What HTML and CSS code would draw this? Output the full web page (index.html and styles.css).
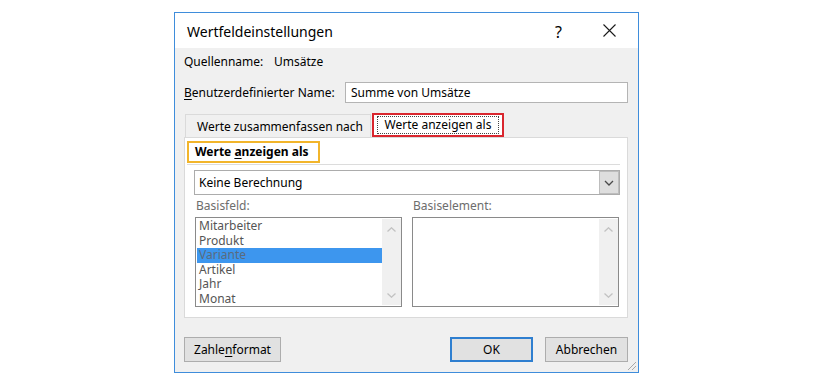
FILE: index.html
```html
<!DOCTYPE html>
<html lang="de">
<head>
<meta charset="utf-8">
<title>Wertfeldeinstellungen</title>
<link rel="stylesheet" href="styles.css">
</head>
<body>
<div class="dialog">
  <div class="titlebar">
    <span class="title">Wertfeldeinstellungen</span>
    <span class="help">?</span>
    <span class="close"><svg width="13" height="13" viewBox="0 0 13 13"><path d="M0.5 0.5 L12.5 12.5 M12.5 0.5 L0.5 12.5" stroke="#1a1a1a" stroke-width="1.1" fill="none"/></svg></span>
  </div>
  <div class="content">
    <div class="row-source"><span class="src-label">Quellenname:</span><span>Umsätze</span></div>
    <div class="row-custom"><span class="custom-label"><u>B</u>enutzerdefinierter Name:</span><div class="textbox">Summe von Umsätze</div></div>
    <div class="tabs">
      <div class="tab">Werte zusammenfassen nach</div>
      <div class="tab tab-active"><span class="focus">Werte anzeigen als</span></div>
    </div>
    <div class="panel">
      <div class="group-head"><span class="highlight">Werte <u>a</u>nzeigen als</span></div>
      <div class="separator"></div>
      <div class="select">
        <span class="select-text">Keine Berechnung</span>
        <span class="select-btn"><svg width="10" height="6" viewBox="0 0 10 6"><path d="M1 1 L5 5 L9 1" stroke="#4a4a4a" stroke-width="1.3" fill="none"/></svg></span>
      </div>
      <div class="lists">
        <div class="list-col">
          <div class="list-label">Basisfeld:</div>
          <div class="listbox">
            <div class="items">
              <div class="item">Mitarbeiter</div>
              <div class="item">Produkt</div>
              <div class="item item-selected">Variante</div>
              <div class="item">Artikel</div>
              <div class="item">Jahr</div>
              <div class="item">Monat</div>
            </div>
            <div class="scrollbar">
              <svg width="9" height="5" viewBox="0 0 9 5"><path d="M0.5 4.5 L4.5 0.8 L8.5 4.5" stroke="#c2c2c2" stroke-width="1.3" fill="none"/></svg>
              <svg width="9" height="5" viewBox="0 0 9 5"><path d="M0.5 0.5 L4.5 4.2 L8.5 0.5" stroke="#c2c2c2" stroke-width="1.3" fill="none"/></svg>
            </div>
          </div>
        </div>
        <div class="list-col">
          <div class="list-label">Basiselement:</div>
          <div class="listbox">
            <div class="items"></div>
            <div class="scrollbar">
              <svg width="9" height="5" viewBox="0 0 9 5"><path d="M0.5 4.5 L4.5 0.8 L8.5 4.5" stroke="#c2c2c2" stroke-width="1.3" fill="none"/></svg>
              <svg width="9" height="5" viewBox="0 0 9 5"><path d="M0.5 0.5 L4.5 4.2 L8.5 0.5" stroke="#c2c2c2" stroke-width="1.3" fill="none"/></svg>
            </div>
          </div>
        </div>
      </div>
    </div>
    <div class="buttons">
      <div class="btn btn-format">Zahle<u>n</u>format</div>
      <div class="spacer"></div>
      <div class="btn btn-ok">OK</div>
      <div class="btn">Abbrechen</div>
    </div>
  </div>
  <svg class="grip" width="12" height="12" viewBox="0 0 12 12"><path d="M11 3 L3 11 M11 7 L7 11" stroke="#a8a8a8" stroke-width="1" fill="none"/></svg>
</div>
</body>
</html>
```
FILE: styles.css
```css
* { box-sizing: border-box; }
body {
  margin: 0;
  background: #ffffff;
  font-family: "Noto Sans", "Open Sans", sans-serif;
  font-size: 12px;
  color: #000;
}
u { text-decoration: underline; text-underline-offset: 2px; }
.dialog {
  position: relative;
  margin: 12px 0 0 174px;
  width: 465px;
  border: 1px solid #3f8ddb;
  background: #f0f0f0;
}
.titlebar {
  height: 35px;
  background: #fff;
  display: flex;
  align-items: center;
  padding-left: 12px;
}
.title { font-size: 14px; flex: 1; margin-top: 2px; }
.help { font-size: 16px; width: 14px; margin-right: 34px; margin-top: 2px; }
.close { width: 13px; height: 13px; margin-right: 22px; display: flex; }
.content {
  padding: 0 10px 10px 9px;
}
.row-source {
  margin-top: 6px;
  height: 16px;
  line-height: 16px;
  display: flex;
}
.src-label { width: 90px; }
.row-custom {
  margin-top: 12px;
  display: flex;
  align-items: center;
}
.custom-label { width: 161px; }
.textbox {
  flex: 1;
  height: 21px;
  border: 1px solid #b4b4b4;
  background: #fff;
  line-height: 19px;
  padding-left: 5px;
}
.tabs {
  margin-top: 10px;
  display: flex;
  height: 24px;
  padding-left: 1px;
}
.tab {
  border: 1px solid #dadada;
  border-bottom: none;
  line-height: 23px;
  margin-top: 1px;
  width: 186px;
  padding-left: 11px;
  white-space: nowrap;
}
.tab-active {
  width: 132px;
  margin-top: 0;
  margin-left: 1px;
  border: 2px solid #d9262e;
  background: #fff;
  padding: 1px 3px;
  line-height: 16px;
}
.focus {
  display: block;
  border: 1px dotted #444;
  text-align: center;
  height: 18px;
}
.panel {
  border: 1px solid #dadada;
  background: #fff;
  width: 444px;
  padding: 3px 7px 10px 2px;
}
.group-head {
  height: 22px;
}
.highlight {
  display: inline-block;
  height: 22px;
  width: 133px;
  border: 2px solid #f2b52b;
  padding-left: 6px;
  font-weight: bold;
  line-height: 17px;
  white-space: nowrap;
}
.separator {
  margin-top: 1px;
  border-top: 1px solid #dcdcdc;
}
.select {
  margin: 5px 0 0 7px;
  height: 25px;
  border: 1px solid #acacac;
  display: flex;
  align-items: stretch;
}
.select-text { flex: 1; line-height: 23px; padding-left: 4px; }
.select-btn {
  width: 20px;
  background: #dedede;
  border: 1px solid #bdbdbd;
  display: flex;
  align-items: center;
  justify-content: center;
}
.lists {
  margin: 4px 0 0 8px;
  display: flex;
  gap: 10px;
}
.list-col { width: 207px; }
.list-label {
  color: #6d6d6d;
  line-height: 14px;
  height: 14px;
  padding-left: 1px;
}
.listbox {
  margin-top: 4px;
  height: 90px;
  border: 1px solid #8a8a8a;
  display: flex;
  padding: 1px 0 1px 1px;
  background: #fff;
}
.items { flex: 1; }
.item {
  line-height: 14.6px;
  height: 14.6px;
  color: #555;
  padding-left: 2px;
}
.item-selected {
  background: #3d96ee;
  color: #5a6b7e;
}
.scrollbar {
  width: 19px;
  background: #f0f0f0;
  display: flex;
  flex-direction: column;
  justify-content: space-between;
  align-items: center;
  padding: 8px 0 7px;
}
.buttons {
  margin-top: 19px;
  display: flex;
  gap: 12px;
}
.spacer { flex: 1; }
.btn {
  height: 25px;
  width: 83px;
  border: 1px solid #adadad;
  background: #e1e1e1;
  text-align: center;
  line-height: 23px;
}
.btn-format { width: 97px; }
.btn-ok { border: 2px solid #2f7fd0; line-height: 21px; }
.grip { position: absolute; right: 1px; bottom: 1px; }
```
